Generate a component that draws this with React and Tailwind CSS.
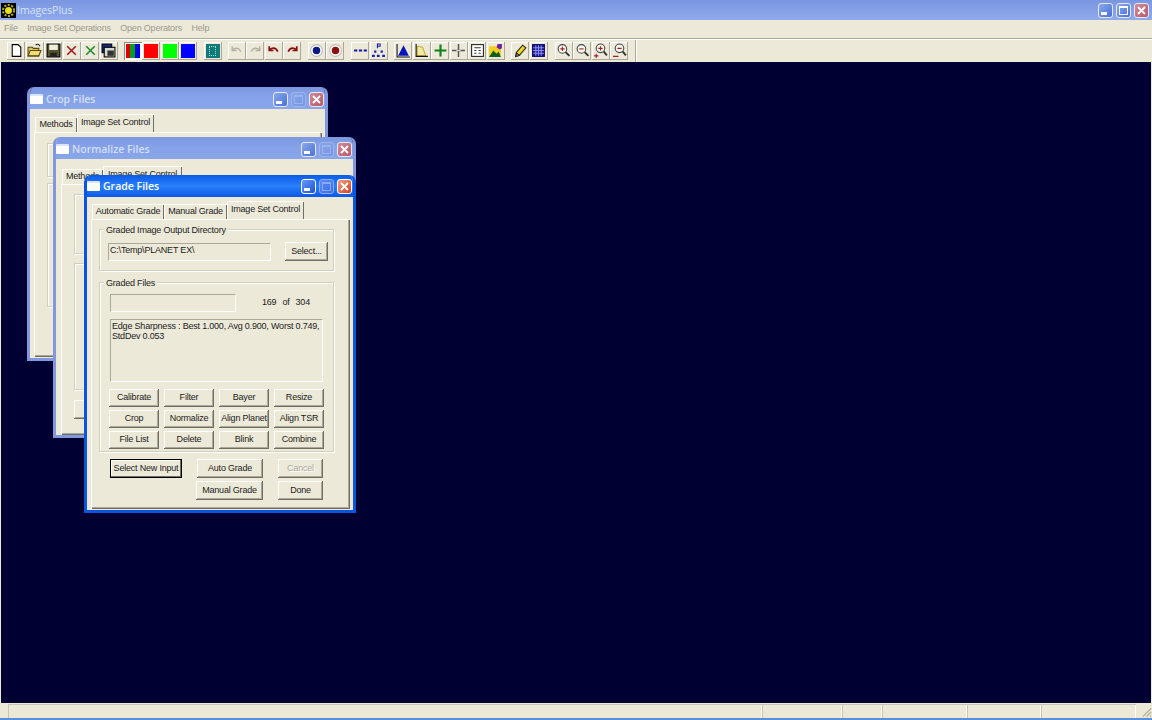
import React from 'react';

const raised = 'shadow-[inset_-1px_-1px_0_#716f64,inset_1px_1px_0_#ffffff,inset_-2px_-2px_0_#aca899]';
const etched = 'border border-[#d0d0bf] shadow-[inset_1px_1px_0_#ffffff,1px_1px_0_#ffffff]';
const sunken = 'border border-t-[#aca899] border-l-[#aca899] border-b-[#ffffff] border-r-[#ffffff]';

const Tool = ({ pressed, children }) => (
    <div className={`w-[18px] h-[18px] flex items-center justify-center ${pressed ? 'bg-[#f7f6f0] shadow-[inset_1px_1px_0_#8f8d80,inset_-1px_-1px_0_#ffffff]' : 'bg-[#ece9d8] shadow-[inset_-1px_-1px_0_#aca899,inset_1px_1px_0_#ffffff]'}`}>
        {children}
    </div>
);

const Ico = ({ children }) => (
    <svg width="15" height="15" viewBox="0 0 14 14" fill="none">{children}</svg>
);

const Swatch = ({ color }) => <div className={`w-[14px] h-[14px] ${color}`}></div>;

const Group = ({ className = '', children }) => <div className={`flex gap-[0.5px] ${className}`}>{children}</div>;

const Toolbar = () => (
    <div className="h-[24px] flex items-center pl-[7px] gap-[6.3px] border-t border-t-[#aca899] shadow-[inset_0_1px_0_#ffffff]">
        <Group>
            <Tool><Ico><path d="M3 1.500h5.500l2.500 2.500v8.500h-8z" fill="#fff" stroke="#000" /></Ico></Tool>
            <Tool><Ico>
                <path d="M1 4h4l1 1h5v7h-10z" fill="#d9c66a" stroke="#5a4a00" />
                <path d="M3 7h10l-2 5h-10z" fill="#f2dc78" stroke="#5a4a00" />
                <path d="M8 2c2-1.500 3-1 4 1" stroke="#222" />
            </Ico></Tool>
            <Tool><Ico>
                <rect x="1" y="1" width="12" height="12" fill="#55552a" stroke="#000" />
                <rect x="3" y="1.500" width="8" height="5" fill="#f0f0e0" />
                <rect x="4" y="9" width="6" height="4" fill="#222" />
            </Ico></Tool>
            <Tool><Ico><path d="M3 3l8 8M11 3l-8 8" stroke="#a01818" strokeWidth="1.400" /></Ico></Tool>
            <Tool><Ico><path d="M3 3l8 8M11 3l-8 8" stroke="#1c8a30" strokeWidth="1.400" /></Ico></Tool>
            <Tool><Ico>
                <rect x="1" y="1" width="9" height="8" fill="#1a2a8a" stroke="#000" />
                <rect x="3" y="4" width="10" height="9" fill="#d8d8d0" stroke="#000" />
                <rect x="6" y="7" width="6" height="5" fill="#333" />
            </Ico></Tool>
        </Group>
        <Group>
            <Tool pressed><div className="w-[14px] h-[14px] flex"><div className="flex-1 bg-[#e00000]"></div><div className="flex-1 bg-[#00a020]"></div><div className="flex-1 bg-[#0000e0]"></div></div></Tool>
            <Tool><Swatch color="bg-[#ff0000]" /></Tool>
            <Tool><Swatch color="bg-[#00ff00]" /></Tool>
            <Tool><Swatch color="bg-[#0000ff]" /></Tool>
        </Group>
        <Group>
            <Tool><div className="w-[14px] h-[14px] bg-[#0f7a78] flex items-center justify-center"><div className="w-[7px] h-[10px] border border-dotted border-[#a8e0d8]"></div></div></Tool>
        </Group>
        <Group>
            <Tool><Ico><path d="M3 3v4h4M3 7c2-3 6-3 8 1" stroke="#b4b2a4" strokeWidth="1.300" /></Ico></Tool>
            <Tool><Ico><path d="M11 3v4h-4M11 7c-2-3-6-3-8 1" stroke="#b4b2a4" strokeWidth="1.300" /></Ico></Tool>
            <Tool><Ico><path d="M3 3v4h4M3 7c2-3 6-3 8 1" stroke="#8a1010" strokeWidth="1.600" /></Ico></Tool>
            <Tool><Ico><path d="M11 3v4h-4M11 7c-2-3-6-3-8 1" stroke="#8a1010" strokeWidth="1.600" /></Ico></Tool>
        </Group>
        <Group>
            <Tool><Ico><circle cx="7" cy="7" r="5.500" fill="#fff" stroke="#b8b8c8" /><circle cx="7" cy="7" r="3.500" fill="#0a1a80" /></Ico></Tool>
            <Tool><Ico><circle cx="7" cy="7" r="5.500" fill="#fff" stroke="#c8b8b8" /><circle cx="7" cy="7" r="3.500" fill="#8a1010" /></Ico></Tool>
        </Group>
        <Group className="ml-[1px]">
            <Tool><Ico><path d="M1 7h3M5.500 7h3M10 7h3" stroke="#1818b0" strokeWidth="2" /></Ico></Tool>
            <Tool><Ico>
                <path d="M1 12h2.500M5.500 12h2.500M10.500 12h2.500M3 8h2M9 8h2" stroke="#1818b0" strokeWidth="2" />
                <path d="M6 5v-4h2.500v2h-2.500" stroke="#1818b0" />
            </Ico></Tool>
        </Group>
        <Group>
            <Tool><Ico><path d="M7 2l5 10h-10z" fill="#0a14b8" /><path d="M1 1v12h12" stroke="#111" /></Ico></Tool>
            <Tool><Ico><path d="M3 3l5 1 3 8h-8z" fill="#f2e8a8" stroke="#c8b030" /><path d="M2 1v11.500h11" stroke="#111" /></Ico></Tool>
            <Tool><Ico><path d="M7 1.500v11M1.500 7h11" stroke="#108018" strokeWidth="2" /></Ico></Tool>
            <Tool><Ico><path d="M7 1v12M1 7h12" stroke="#555" strokeWidth="1.400" /><path d="M5 7h4" stroke="#ddd" /></Ico></Tool>
            <Tool><Ico>
                <rect x="1.500" y="1.500" width="11" height="11" fill="#fff" stroke="#222" />
                <path d="M4 4.500h6M4 7h2M8 7h2M4 9.500h2M8 9.500h2" stroke="#333" />
            </Ico></Tool>
            <Tool><Ico>
                <rect x="1" y="3" width="11" height="10" fill="#f0d020" />
                <path d="M1 13l4-6 3 3 2-2 2 5z" fill="#106018" />
                <path d="M9 1l4 0 0 4-2 1-3-2z" fill="#7020a0" />
            </Ico></Tool>
        </Group>
        <Group>
            <Tool><Ico>
                <path d="M3 9l6-7 3 2.500-6 7-3.500 1z" fill="#f4d820" stroke="#222" />
                <path d="M2.500 12.500l1-3 2.500 2z" fill="#f0c8a0" stroke="#222" />
            </Ico></Tool>
            <Tool><Ico>
                <rect x="1.500" y="1.500" width="11" height="11" fill="#1414a0" stroke="#0a0a60" />
                <path d="M4.500 2v10M7 2v10M9.500 2v10M2 4.500h10M2 7h10M2 9.500h10" stroke="#9090e0" />
            </Ico></Tool>
        </Group>
        <Group className="ml-[1px]">
            <Tool><Ico><circle cx="6" cy="5.500" r="4" fill="#f6f6ee" stroke="#444" /><path d="M9 8.500l3.500 3.500" stroke="#333" strokeWidth="1.800" /><path d="M4 5.500h4M6 3.500v4" stroke="#a02020" /></Ico></Tool>
            <Tool><Ico><circle cx="6" cy="5.500" r="4" fill="#f6f6ee" stroke="#444" /><path d="M9 8.500l3.500 3.500" stroke="#333" strokeWidth="1.800" /><path d="M4 5.500h4" stroke="#a02020" /></Ico></Tool>
            <Tool><Ico><circle cx="7" cy="5" r="4" fill="#f6f6ee" stroke="#444" /><path d="M10 8l3 3.500" stroke="#333" strokeWidth="1.800" /><path d="M5 5h4M7 3v4M1 12h4M3 10v4" stroke="#a02020" /></Ico></Tool>
            <Tool><Ico><circle cx="7" cy="5" r="4" fill="#f6f6ee" stroke="#444" /><path d="M10 8l3 3.500" stroke="#333" strokeWidth="1.800" /><path d="M5 5h4M1 12.500h5" stroke="#a02020" /></Ico></Tool>
        </Group>
        <div className="w-[2px] h-[22px] border-l border-l-[#aca899] border-r border-r-[#ffffff]"></div>
    </div>
);

const CtlButton = ({ kind, variant }) => {
    const tone = {
        active: kind === 'close'
            ? 'from-[#f0a088] to-[#d03818] border-white'
            : 'from-[#6a98f8] to-[#1a50d8] border-white',
        inactive: kind === 'close'
            ? 'from-[#d08c98] to-[#b85868] border-[#e4e8f8]'
            : 'from-[#8aa8ea] to-[#4a70d8] border-[#e4e8f8]',
        faded: 'from-[#8aa6e8] to-[#7494e4] border-[#9cb4ec]',
        fadedActive: 'from-[#5a8cf4] to-[#3a6ce8] border-[#88aaf0]',
    }[variant];
    const mark = variant === 'faded' ? 'border-[#9cb4ec]' : variant === 'fadedActive' ? 'border-[#88aaf0]' : 'border-white';
    return (
        <div className={`w-[15px] h-[15px] rounded-[3px] border bg-gradient-to-br flex items-center justify-center ${tone}`}>
            {kind === 'min' && <div className="w-[6px] h-[3px] bg-white self-end mb-[2px] mr-[3px]"></div>}
            {kind === 'max' && <div className={`w-[9px] h-[9px] border border-t-2 ${mark}`}></div>}
            {kind === 'close' && (
                <svg width="11" height="11" viewBox="0 0 11 11"><path d="M2 2l7 7M9 2l-7 7" stroke="#fff" strokeWidth="1.800" /></svg>
            )}
        </div>
    );
};

const Window = ({ title, active, className, children }) => (
    <div className={`absolute flex flex-col rounded-t-[7px] overflow-hidden border-x-[3px] border-b-[3px] ${active ? 'border-[#0a55e0]' : 'border-[#8298dc]'} ${className}`}>
        <div className={`h-[22px] shrink-0 flex items-center pr-[1px] bg-gradient-to-b ${active ? 'from-[#0a5ae8] via-[#2a80fa] to-[#0a58e4]' : 'pt-[2px] from-[#7c98e0] via-[#86a2e8] to-[#8aa6ea]'}`}>
            <div className="w-[13px] h-[10px] bg-white rounded-[1px] border-t-2 border-t-[#d8e4fc]"></div>
            <span className={`ml-[3px] pt-[1px] text-[10.5px] tracking-normal font-semibold font-['Open_Sans',sans-serif] flex-1 ${active ? 'text-white' : 'text-[#d4dff8]'}`}>{title}</span>
            <div className="flex gap-[3px]">
                <CtlButton kind="min" variant={active ? 'active' : 'inactive'} />
                <CtlButton kind="max" variant={active ? 'fadedActive' : 'faded'} />
                <CtlButton kind="close" variant={active ? 'active' : 'inactive'} />
            </div>
        </div>
        <div className="flex-1 bg-[#ece9d8] min-h-0">{children}</div>
    </div>
);

const Tabs = ({ items, className }) => (
    <div className={`flex items-end ${className}`}>
        {items.map((tab) => (
            <div
                key={tab.label}
                style={{ width: tab.w }}
                className={`flex items-center justify-center whitespace-nowrap ${tab.on ? 'h-[18px] pb-[1px] bg-[#ece9d8] shadow-[inset_1px_1px_0_#ffffff,inset_-1px_0_0_#716f64]' : 'h-[15px] shadow-[inset_1px_1px_0_#ffffff,inset_-1px_0_0_#716f64]'}`}
            >
                {tab.label}
            </div>
        ))}
    </div>
);

const Panel = ({ className, children }) => (
    <div className={`shadow-[inset_1px_1px_0_#ffffff,inset_-1px_-1px_0_#716f64,inset_-2px_-2px_0_#aca899] ${className}`}>{children}</div>
);

const Fieldset = ({ legend, className, children }) => (
    <div className={`relative ${etched} ${className}`}>
        {legend && <span className="absolute left-[4px] top-[-6px] px-[2px] bg-[#ece9d8] leading-[13px] whitespace-nowrap">{legend}</span>}
        {children}
    </div>
);

const Btn = ({ className, disabled, focused, children }) => (
    <div className={`h-[19px] flex items-center justify-center whitespace-nowrap bg-[#ece9d8] ${focused ? 'border border-black shadow-[inset_-1px_-1px_0_#716f64,inset_1px_1px_0_#ffffff]' : raised} ${disabled ? 'text-[#aca899] [text-shadow:1px_1px_0_#ffffff]' : ''} ${className}`}>
        {children}
    </div>
);

const opButtons = ['Calibrate', 'Filter', 'Bayer', 'Resize', 'Crop', 'Normalize', 'Align Planet', 'Align TSR', 'File List', 'Delete', 'Blink', 'Combine'];

const statusPanes = ['w-[754px]', 'w-[80px]', 'w-[40px]', 'w-[85px]', 'w-[74px]', 'w-[95px]'];

export default function App() {
    return (
        <div className="w-[1152px] h-[720px] flex flex-col overflow-hidden bg-[#ece9d8] text-[9px] tracking-[-0.2px] text-[#1c1c1c] font-['Liberation_Sans',Arial,sans-serif]">
            <div className="h-[20px] shrink-0 flex items-center bg-gradient-to-b from-[#7a96e0] via-[#84a0e6] to-[#8fabec] pr-[3px]">
                <div className="w-[15px] h-[15px] ml-[1px] bg-black flex items-center justify-center">
                    <svg width="13" height="13" viewBox="0 0 13 13">
                        <circle cx="6.500" cy="6.500" r="5.500" fill="none" stroke="#b8b020" strokeWidth="2" strokeDasharray="2 1.500" />
                        <circle cx="6.500" cy="6.500" r="3.500" fill="#e8e020" />
                    </svg>
                </div>
                <span className="ml-[1px] pt-[1px] flex-1 text-[10.5px] tracking-normal font-['Open_Sans',sans-serif] text-[#d8e2f8]">ImagesPlus</span>
                <div className="flex gap-[3px]">
                    <CtlButton kind="min" variant="inactive" />
                    <CtlButton kind="max" variant="inactive" />
                    <CtlButton kind="close" variant="inactive" />
                </div>
            </div>

            <div className="h-[18px] shrink-0 flex items-center gap-[9.500px] pl-[4px] text-[#9c9a8e]">
                <span>File</span>
                <span>Image Set Operations</span>
                <span>Open Operators</span>
                <span>Help</span>
            </div>

            <Toolbar />

            <div className="relative flex-1 mx-[1px] bg-[#000033] min-h-0 overflow-hidden">
                <Window title="Crop Files" className="left-[26px] top-[25px] w-[301px] h-[274px]">
                    <Tabs
                        className="mt-[5px] ml-[5px]"
                        items={[{ label: 'Methods', w: 42 }, { label: 'Image Set Control', w: 77, on: true }]}
                    />
                    <Panel className="ml-[4px] w-[288px] h-[225px] pt-[11px] pl-[13px]">
                        <Fieldset className="w-[262px] h-[34px]" />
                        <Fieldset className="w-[262px] h-[124px] mt-[6px]" />
                    </Panel>
                </Window>

                <Window title="Normalize Files" className="left-[52px] top-[75px] w-[303px] h-[301px]">
                    <Tabs
                        className="mt-[7px] ml-[6px]"
                        items={[{ label: 'Methods', w: 41 }, { label: 'Image Set Control', w: 79, on: true }]}
                    />
                    <Panel className="ml-[5px] w-[289px] h-[251px] pt-[10px] pl-[13px]">
                        <Fieldset className="w-[262px] h-[60px]" />
                        <Fieldset className="w-[262px] h-[127px] mt-[9px]" />
                        <Btn className="w-[60px] mt-[10px]">Crop</Btn>
                    </Panel>
                </Window>

                <Window title="Grade Files" active className="left-[83px] top-[113px] w-[272px] h-[338px]">
                    <Tabs
                        className="mt-[4px] ml-[5px]"
                        items={[
                            { label: 'Automatic Grade', w: 72 },
                            { label: 'Manual Grade', w: 63 },
                            { label: 'Image Set Control', w: 77, on: true },
                        ]}
                    />
                    <Panel className="ml-[4px] w-[259px] h-[290px] pt-[10px] pl-[8px]">
                        <Fieldset legend="Graded Image Output Directory" className="w-[235px] h-[42px] pt-[13px] pl-[8px] flex">
                            <div className={`w-[163px] h-[18px] flex items-center pb-[2px] pl-[1px] ${sunken}`}>C:\Temp\PLANET EX\</div>
                            <Btn className="w-[43px] ml-[14px] mt-[-1px]">Select...</Btn>
                        </Fieldset>
                        <Fieldset legend="Graded Files" className="w-[235px] h-[170px] mt-[11px] pt-[11px] pl-[10px]">
                            <div className="flex items-end">
                                <div className={`w-[126px] h-[18px] ${sunken}`}></div>
                                <span className="ml-[26px] mb-[3px] leading-[13px]">169</span>
                                <span className="ml-[6px] mb-[3px] leading-[13px]">of</span>
                                <span className="ml-[6px] mb-[3px] leading-[13px]">304</span>
                            </div>
                            <div className={`w-[213px] h-[63px] mt-[7px] pl-[1px] pt-[1px] pr-[1px] leading-[10px] ${sunken}`}>
                                Edge Sharpness : Best 1.000, Avg 0.900, Worst 0.749, StdDev 0.053
                            </div>
                            <div className="grid grid-cols-[50px_50px_50px_50px] gap-x-[5px] gap-y-[3px] mt-[7px] ml-[-1px]">
                                {opButtons.map((label) => (
                                    <Btn key={label} className="!h-[18px]">{label}</Btn>
                                ))}
                            </div>
                        </Fieldset>
                        <div className="flex mt-[7px] ml-[11px]">
                            <Btn focused className="w-[72px]">Select New Input</Btn>
                            <Btn className="w-[66px] ml-[15px]">Auto Grade</Btn>
                            <Btn disabled className="w-[45px] ml-[15px]">Cancel</Btn>
                        </div>
                        <div className="flex mt-[3px] ml-[97px]">
                            <Btn className="w-[67px]">Manual Grade</Btn>
                            <Btn className="w-[45px] ml-[15px]">Done</Btn>
                        </div>
                    </Panel>
                </Window>
            </div>

            <div className="h-[14px] shrink-0 flex items-stretch pl-[8px] mt-[1px]">
                {statusPanes.map((w, i) => (
                    <div key={i} className={`${w} shrink-0 shadow-[inset_1px_1px_0_#c8c5b2,inset_-1px_0_0_#ffffff]`}></div>
                ))}
                <svg className="ml-[5px] mt-[2px]" width="12" height="12" viewBox="0 0 12 12">
                    <path d="M11 2l-9 9M11 6l-5 5M11 10l-1 1" stroke="#aca899" strokeWidth="1.200" />
                </svg>
            </div>
            <div className="h-[2px] shrink-0 bg-[#5a8ed8]"></div>
        </div>
    );
}
